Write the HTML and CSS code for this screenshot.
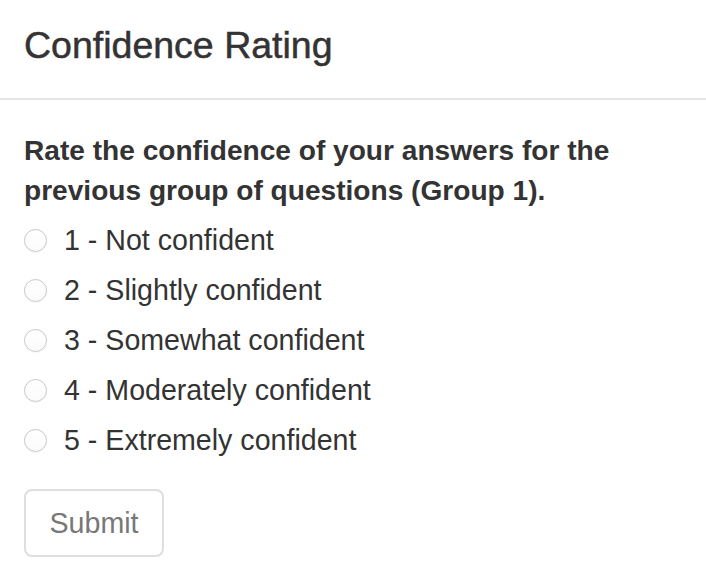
FILE: index.html
```html
<!DOCTYPE html>
<html>
<head>
<meta charset="utf-8">
<link rel="stylesheet" href="styles.css">
</head>
<body>
<div class="modal">
  <div class="modal-header">
    <h4 class="modal-title">Confidence Rating</h4>
  </div>
  <div class="modal-body">
    <p class="question">Rate the confidence of your answers for the previous group of questions (Group 1).</p>
    <div class="options">
      <label class="radio"><span class="dot"></span><span>1 - Not confident</span></label>
      <label class="radio"><span class="dot"></span><span>2 - Slightly confident</span></label>
      <label class="radio"><span class="dot"></span><span>3 - Somewhat confident</span></label>
      <label class="radio"><span class="dot"></span><span>4 - Moderately confident</span></label>
      <label class="radio"><span class="dot"></span><span>5 - Extremely confident</span></label>
    </div>
    <button class="btn" type="button">Submit</button>
  </div>
</div>
</body>
</html>
```

FILE: styles.css
```css
html, body {
  margin: 0;
  padding: 0;
  background: #ffffff;
}
body {
  font-family: "Liberation Sans", Arial, Helvetica, sans-serif;
  color: #333333;
}
.modal {
  width: 706px;
}
.modal-header {
  height: 100px;
  box-sizing: border-box;
  padding: 25px 24px 0 24px;
  border-bottom: 2px solid #e5e5e5;
}
.modal-title {
  margin: 0;
  font-size: 37.5px;
  font-weight: normal;
  line-height: 40px;
  color: #333333;
  -webkit-text-stroke: 0.5px #333333;
}
.modal-body {
  padding: 31px 24px 0 24px;
}
.question {
  margin: 0;
  font-size: 28.1px;
  font-weight: bold;
  line-height: 40px;
}
.options {
  display: flex;
  flex-direction: column;
  gap: 10px;
  margin-top: 9px;
}
.radio {
  display: flex;
  align-items: center;
  height: 40px;
  font-size: 28.6px;
  line-height: 40px;
}
.dot {
  box-sizing: border-box;
  width: 23px;
  height: 23px;
  margin-right: 17px;
  border-radius: 50%;
  border: 1px solid #c8c8c8;
  background: linear-gradient(#ffffff, #fbfbfb);
  box-shadow: 0 0.5px 1px rgba(0,0,0,0.05);
  flex: none;
}
.btn {
  margin-top: 29px;
  width: 140px;
  height: 68px;
  box-sizing: border-box;
  border: 2px solid #dedede;
  border-radius: 8px;
  background: #ffffff;
  color: #777777;
  font-family: "Liberation Sans", Arial, Helvetica, sans-serif;
  font-size: 28.6px;
  padding: 0;
}
```
